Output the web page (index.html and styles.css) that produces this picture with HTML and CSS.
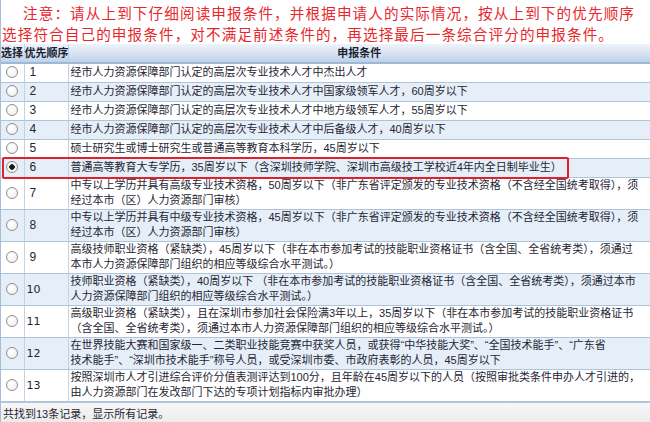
FILE: index.html
```html
<!DOCTYPE html>
<html lang="zh-CN">
<head>
<meta charset="utf-8">
<title>申报条件</title>
<link rel="stylesheet" href="styles.css">
</head>
<body>
<div class="panel">
  <p class="notice"><span class="indent">注意：请从上到下仔细阅读申报条件，并根据申请人的实际情况，按从上到下的优先顺序</span><br>选择符合自己的申报条件，对不满足前述条件的，再选择最后一条综合评分的申报条件。</p>
  <div class="grid-wrap">
    <table class="grid">
      <colgroup><col class="c-sel"><col class="c-ord"><col class="c-cond"></colgroup>
      <thead>
        <tr><th class="h-sel">选择</th><th class="h-ord">优先顺序</th><th class="h-cond">申报条件</th></tr>
      </thead>
      <tbody>
        <tr class="one"><td class="sel"><span class="radio"></span></td><td class="ord">1</td><td>经市人力资源保障部门认定的高层次专业技术人才中杰出人才</td></tr>
        <tr class="one alt"><td class="sel"><span class="radio"></span></td><td class="ord">2</td><td>经市人力资源保障部门认定的高层次专业技术人才中国家级领军人才，60周岁以下</td></tr>
        <tr class="one"><td class="sel"><span class="radio"></span></td><td class="ord">3</td><td>经市人力资源保障部门认定的高层次专业技术人才中地方级领军人才，55周岁以下</td></tr>
        <tr class="one alt"><td class="sel"><span class="radio"></span></td><td class="ord">4</td><td>经市人力资源保障部门认定的高层次专业技术人才中后备级人才，40周岁以下</td></tr>
        <tr class="one"><td class="sel"><span class="radio"></span></td><td class="ord">5</td><td>硕士研究生或博士研究生或普通高等教育本科学历，45周岁以下</td></tr>
        <tr class="one alt"><td class="sel"><span class="radio checked"></span></td><td class="ord">6</td><td>普通高等教育大专学历，35周岁以下（含深圳技师学院、深圳市高级技工学校近4年内全日制毕业生）</td></tr>
        <tr class="two"><td class="sel"><span class="radio"></span></td><td class="ord">7</td><td>中专以上学历并具有高级专业技术资格，50周岁以下（非广东省评定颁发的专业技术资格（不含经全国统考取得），须<br>经过本市（区）人力资源部门审核）</td></tr>
        <tr class="two alt"><td class="sel"><span class="radio"></span></td><td class="ord">8</td><td>中专以上学历并具有中级专业技术资格，45周岁以下（非广东省评定颁发的专业技术资格（不含经全国统考取得），须<br>经过本市（区）人力资源部门审核）</td></tr>
        <tr class="two"><td class="sel"><span class="radio"></span></td><td class="ord">9</td><td>高级技师职业资格（紧缺类），45周岁以下（非在本市参加考试的技能职业资格证书（含全国、全省统考类），须通过<br>本市人力资源保障部门组织的相应等级综合水平测试。）</td></tr>
        <tr class="two alt"><td class="sel"><span class="radio"></span></td><td class="ord wide">10</td><td>技师职业资格（紧缺类），40周岁以下 （非在本市参加考试的技能职业资格证书（含全国、全省统考类），须通过本市<br>人力资源保障部门组织的相应等级综合水平测试。）</td></tr>
        <tr class="two"><td class="sel"><span class="radio"></span></td><td class="ord wide">11</td><td>高级职业资格（紧缺类），且在深圳市参加社会保险满3年以上，35周岁以下（非在本市参加考试的技能职业资格证书<br>（含全国、全省统考类），须通过本市人力资源保障部门组织的相应等级综合水平测试。）</td></tr>
        <tr class="two alt"><td class="sel"><span class="radio"></span></td><td class="ord wide">12</td><td>在世界技能大赛和国家级一、二类职业技能竞赛中获奖人员，或获得“中华技能大奖”、“全国技术能手”、“广东省<br>技术能手”、“深圳市技术能手”称号人员，或受深圳市委、市政府表彰的人员，45周岁以下</td></tr>
        <tr class="two"><td class="sel"><span class="radio"></span></td><td class="ord wide">13</td><td>按照深圳市人才引进综合评价分值表测评达到100分，且年龄在45周岁以下的人员（按照审批类条件申办人才引进的，<br>由人力资源部门在发改部门下达的专项计划指标内审批办理）</td></tr>
      </tbody>
    </table>
    <div class="mark"></div>
  </div>
  <div class="footer">共找到13条记录，显示所有记录。</div>
</div>
</body>
</html>
```

FILE: styles.css
```css
* { box-sizing: border-box; }
html, body { margin: 0; padding: 0; background: #ffffff; }
body {
  width: 650px;
  height: 422px;
  overflow: hidden;
  font-family: "Liberation Sans", "Noto Sans CJK SC", sans-serif;
}
.panel {
  border-left: 1px solid #a9bdd6;
  height: 422px;
  display: flex;
  flex-direction: column;
}
.notice {
  margin: 0;
  height: 44px;
  padding: 2px 0 0 1px;
  font-family: "Noto Sans CJK SC", sans-serif;
  font-size: 14.6px;
  letter-spacing: 1.1px;
  line-height: 21px;
  color: #e8262c;
  white-space: nowrap;
}
.indent { padding-left: 21px; }
.grid-wrap { position: relative; }
.grid {
  width: 649px;
  border-collapse: collapse;
  table-layout: fixed;
  font-size: 11px;
  color: #1e2633;
}
.c-sel { width: 23px; }
.c-ord { width: 44px; }
.grid th {
  height: 19px;
  padding: 0;
  font-size: 11px;
  font-weight: bold;
  color: #1b2330;
  background: linear-gradient(#eef3fa, #d6e2f1 55%, #bed1e9);
  border-bottom: 2px solid #9fb8d6;
  line-height: 17px;
  white-space: nowrap;
}
.h-sel { text-align: left; padding-left: 1px; border-right: 1px solid #c3d3e6; }
.h-ord { text-align: left; padding-left: 1px; border-right: 1px solid #c3d3e6; }
.h-cond { text-align: center; }
.grid td {
  padding: 0 0 0 2px;
  border-bottom: 1px solid #aec3dc;
  line-height: 15px;
  vertical-align: middle;
  white-space: nowrap;
  overflow: hidden;
}
.grid td.sel { text-align: center; padding: 0; border-right: 1px solid #c3d3e6; }
.grid td.ord { font-size: 12px; padding-left: 5px; border-right: 1px solid #c3d3e6; }
.grid td.ord.wide { padding-left: 2px; font-family: "DejaVu Sans", sans-serif; font-size: 11px; }
.grid tr.one td { height: 19px; }
.grid tr.two td { height: 32px; }
.grid tr.alt td { background: #e6eef8; }
.radio {
  display: inline-block;
  width: 12px;
  height: 12px;
  border-radius: 50%;
  border: 1px solid #8e8f8f;
  background: radial-gradient(circle at 40% 35%, #ffffff, #ececec);
  vertical-align: middle;
  position: relative;
  top: -1px;
}
.radio.checked {
  background: radial-gradient(circle, #1a1a1a 0 2.5px, #f4f4f4 3px);
}
.mark {
  position: absolute;
  left: 1px;
  top: 113px;
  width: 567px;
  height: 22px;
  border: 2px solid #e0212a;
  border-radius: 2px;
  pointer-events: none;
}
.footer {
  flex: 1;
  padding: 4px 0 0 2px;
  font-size: 11px;
  line-height: 15px;
  color: #1e2633;
  background: linear-gradient(#f7f7f7, #ececec);
  border-top: 1px solid #b7c7da;
}
```
